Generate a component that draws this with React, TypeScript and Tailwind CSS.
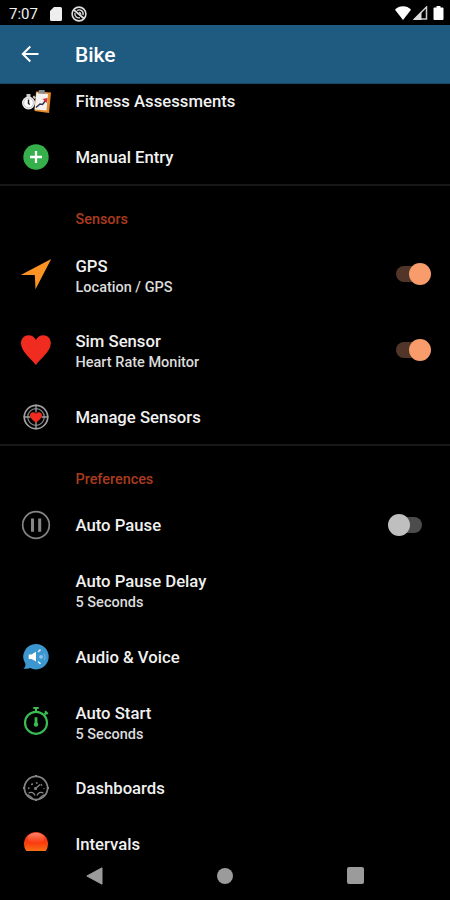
import { useState } from 'react';
import type { ReactNode } from 'react';

const AssessmentIcon = () => (
  <svg width="32" height="32" viewBox="0 0 32 32">
    <path d="M16 6.5 31 7.5 29 28 14.5 26z" fill="#e58a2b" />
    <path d="M16.5 7.5 28 9 26.5 25.5 14.5 24.5z" fill="#f4f2f0" />
    <path d="M18 8.500 19 5h5.500l.8 4z" fill="#8b8b8b" />
    <path d="m16 22.500 4-3.500 2.500.5 4-5" fill="none" stroke="#363049" strokeWidth="1.500" />
    <path d="m22.500 14 5-1-.6 5z" fill="#dd2c34" />
    <circle cx="8.500" cy="18" r="6.500" fill="#eeeeee" />
    <path d="M6.500 9h4v3h-4zM12.500 12l1.500-1.500 2 2-1.500 1.500z" fill="#cccccc" />
    <circle cx="8.500" cy="18" r="4.800" fill="#fff" stroke="#a6a6a6" strokeWidth=".6" />
    <path d="M8.500 14.500v4l1.300 1" fill="none" stroke="#222" strokeWidth="1.500" />
  </svg>
);

const PlusIcon = () => (
  <svg width="32" height="32" viewBox="0 0 32 32">
    <circle cx="16" cy="16" r="12.700" fill="#36b04a" />
    <path d="M16 10v12M10 16h12" stroke="#fff" strokeWidth="2.300" />
  </svg>
);

const ArrowIcon = () => (
  <svg width="32" height="32" viewBox="0 0 32 32">
    <path d="M31.200 1 15.500 31.200l-.7-14.200L.7 17z" fill="#fb9425" />
  </svg>
);

const HeartIcon = () => (
  <svg width="32" height="32" viewBox="0 0 32 32">
    <path d="M15.800 31C11 24.500 1 17.500 1 9.200 1 4.500 4.300 1.300 8.500 1.300c3.400 0 6 1.800 7.400 4.800 1.400-3 4.100-4.800 7.400-4.800 4.300 0 7.500 3.200 7.500 7.900C30.800 17.500 20.500 24.500 15.800 31z" fill="#f02c20" />
  </svg>
);

const TargetIcon = () => (
  <svg width="32" height="32" viewBox="0 0 32 32">
    <circle cx="16" cy="16" r="11.700" fill="none" stroke="#a0a0a0" strokeWidth="1.700" />
    <circle cx="16" cy="16" r="8.300" fill="none" stroke="#858585" strokeWidth="1.300" />
    <path d="M16 3.500v8M16 21v7.500M3.500 16h7M21.500 16h7" stroke="#a0a0a0" strokeWidth="1.300" />
    <path d="M16 22c-2-2.300-6-4.300-6-7.700 0-3.500 4.500-4 6-1.500 1.500-2.500 6-2 6 1.500 0 3.400-4 5.400-6 7.700z" fill="#f02c20" />
  </svg>
);

const PauseIcon = () => (
  <svg width="32" height="32" viewBox="0 0 32 32">
    <circle cx="16" cy="16" r="13.300" fill="none" stroke="#858585" strokeWidth="1.700" />
    <path d="M12.500 9.500v13.300M19.700 9.500v13.300" stroke="#858585" strokeWidth="3" />
  </svg>
);

const VoiceIcon = () => (
  <svg width="32" height="32" viewBox="0 0 32 32">
    <path d="M16 3a12.700 12.700 0 1 1-5.800 24c-2 .8-4.500 1-6.700.7 1.500-1.200 2-2.700 1.900-5A12.700 12.700 0 0 1 16 3z" fill="#3c96cf" />
    <path d="M8.700 13.500h2.800l4.500-2.700v9.800l-4.500-2.600H8.700z" fill="#fff" />
    <path d="m18 11 2.500-2.300M18 20.500l2.500 2.300" stroke="#dceefa" strokeWidth="1.600" />
    <circle cx="21" cy="15.800" r="1.900" fill="#8fc7ea" />
    <path d="M24 12.500c1.200 2 1.200 4.600 0 6.600" fill="none" stroke="#68afdc" strokeWidth="1.200" />
  </svg>
);

const StopwatchIcon = () => (
  <svg width="32" height="32" viewBox="0 0 32 32">
    <circle cx="16" cy="17.800" r="11" fill="none" stroke="#39bd52" strokeWidth="2.200" />
    <path d="M13.300 3.100h5.400M16 3V7M24.500 9.500l2.500-2.500M25 6.300l2.800 2.700" stroke="#39bd52" strokeWidth="2" />
    <path d="M16 12.300v8" stroke="#39bd52" strokeWidth="2.800" />
    <circle cx="16" cy="19.500" r="2.200" fill="#39bd52" />
  </svg>
);

const GaugeIcon = () => (
  <svg width="32" height="32" viewBox="0 0 32 32" fill="none" stroke="#858585">
    <circle cx="16" cy="16" r="11.600" strokeWidth="1.700" />
    <path d="M16 3v2M16 27v2M3 16h2M27 16h2" strokeWidth="2" />
    <path d="M8.500 17A8 8 0 0 1 24 17" strokeWidth="1.500" strokeDasharray="1.800 3.200" />
    <path d="m15 17 5-4.500M8.500 21c3-1.500 5.500-.5 6.500 2.500M23.500 21c-3-1.500-5.500-.5-6.500 2.500M7.500 22.500l5 3.500M24.500 22.500l-5 3.500" strokeWidth="1.300" />
    <circle cx="15.500" cy="16.500" r="1.500" fill="#858585" stroke="none" />
  </svg>
);

const BallIcon = () => (
  <svg width="32" height="32" viewBox="0 0 32 32">
    <defs>
      <linearGradient id="ball" x1="0" y1="0" x2="0" y2="1">
        <stop offset="0" stopColor="#ef3e24" />
        <stop offset=".45" stopColor="#fa3a0d" />
        <stop offset=".85" stopColor="#f67a18" />
      </linearGradient>
      <linearGradient id="shine" x1="0" y1="0" x2="0" y2="1">
        <stop offset="0" stopColor="#ffb8a0" stopOpacity=".6" />
        <stop offset="1" stopColor="#ff7048" stopOpacity=".1" />
      </linearGradient>
    </defs>
    <circle cx="16" cy="16" r="12" fill="url(#ball)" />
    <ellipse cx="16" cy="10" rx="8.500" ry="5" fill="url(#shine)" />
  </svg>
);

interface RowProps {
  title: string;
  subtitle?: string;
  icon?: ReactNode;
  on?: boolean;
}

function Toggle({ initial }: { initial: boolean }) {
  const [on, setOn] = useState(initial);
  return (
    <button
      role="switch"
      aria-checked={on}
      onClick={() => setOn(!on)}
      className={`mr-[19px] flex h-[22px] w-[43px] items-center ${on ? 'justify-end' : 'justify-start'}`}
    >
      <span className={`h-4 w-[25px] rounded-full ${on ? '-mr-[12px] bg-[#503528]' : 'order-2 -ml-[13px] bg-[#4c4c4c]'}`} />
      <span className={`z-10 size-[22px] rounded-full ${on ? 'bg-[#f99c6c]' : 'bg-[#bfbfbf]'}`} />
    </button>
  );
}

function Row({ title, subtitle, icon, on }: RowProps) {
  return (
    <div className={`flex shrink-0 items-center ${subtitle ? 'h-[75.5px] pb-[2px]' : 'h-14'}`}>
      <div className="flex w-[75.5px] shrink-0 pl-5">{icon}</div>
      <div className={`flex-1 ${subtitle ? 'pt-[5px]' : 'pt-px'}`}>
        <p className="text-[16.7px] leading-[21px] font-medium">{title}</p>
        {subtitle && <p className="text-[14.5px] leading-[21px] font-medium text-[#dcdcdc]">{subtitle}</p>}
      </div>
      {on !== undefined && <Toggle initial={on} />}
    </div>
  );
}

const Category = ({ title }: { title: string }) => (
  <h2 className="-mt-px h-[53.5px] shrink-0 border-t-2 border-[#181818] pt-6 pl-[75.5px] text-[14.4px] leading-5 font-medium text-[#ab3b1e]">
    {title}
  </h2>
);

function StatusBar() {
  return (
    <div className="flex h-[25px] shrink-0 items-center pt-[2px] pr-[6px] pl-[9px]">
      <span className="w-[41px] text-[15px] leading-5">7:07</span>
      <svg width="12" height="14" viewBox="0 0 12 14">
        <path d="M4 0h6.500Q12 0 12 1.500v11Q12 14 10.500 14h-9Q0 14 0 12.500V4z" fill="#eee" />
      </svg>
      <svg className="ml-[9px]" width="16" height="16" viewBox="0 0 16 16" fill="none" stroke="#ddd">
        <circle cx="8" cy="8" r="6.900" strokeWidth="1.600" />
        <path d="m3 4 10 8.500" strokeWidth="1.800" />
        <path d="M6 4.500c3-1.700 7 .5 6 4.500M4 7c-.7 3 2 5.500 5 4.700M8 6.500c1.200 0 2 1 1.700 2" strokeWidth="1.400" />
      </svg>
      <div className="ml-auto flex items-center gap-[2px] pb-px">
        <svg width="16" height="14" viewBox="0 0 16 14">
          <path d="M0 3.700C4-.9 12-.9 16 3.700L8 14z" fill="#fff" />
        </svg>
        <svg width="15" height="14" viewBox="0 0 15 14">
          <path d="M13.500 1v12H1.500z" fill="none" stroke="#ccc" strokeWidth="1.500" />
          <path d="M0 14 8.500 5.500V14z" fill="#ddd" />
        </svg>
        <svg className="ml-[3px]" width="11" height="14" viewBox="0 0 11 14">
          <path d="M3.500 0h4v1.500H9.500q1 0 1 1V13q0 1-1 1h-8q-1 0-1-1V2.500q0-1 1-1h2z" fill="#fff" />
        </svg>
      </div>
    </div>
  );
}

export default function App() {
  return (
    <div className="flex h-[900px] w-[450px] flex-col overflow-hidden bg-black font-[Roboto,sans-serif] text-[#f1f1f1]">
      <StatusBar />
      <header className="flex h-[59px] shrink-0 items-center border-b border-[#194663] bg-[#1f5a80] pl-[21px]">
        <svg width="18" height="18" viewBox="0 0 18 18" fill="none" stroke="#fff" strokeWidth="2">
          <path d="M17.500 9H2M9.300 1.500 1.800 9l7.500 7.500" />
        </svg>
        <h1 className="ml-9 pt-[2px] text-[21px] leading-6 font-medium text-white">Bike</h1>
      </header>

      <main className="flex h-[767px] shrink-0 flex-col overflow-hidden">
        <div className="-mt-[11px] flex flex-col">
          <Row title="Fitness Assessments" icon={<AssessmentIcon />} />
          <Row title="Manual Entry" icon={<PlusIcon />} />

          <Category title="Sensors" />
          <Row title="GPS" subtitle="Location / GPS" icon={<ArrowIcon />} on />
          <Row title="Sim Sensor" subtitle="Heart Rate Monitor" icon={<HeartIcon />} on />
          <Row title="Manage Sensors" icon={<TargetIcon />} />

          <Category title="Preferences" />
          <Row title="Auto Pause" icon={<PauseIcon />} on={false} />
          <Row title="Auto Pause Delay" subtitle="5 Seconds" />
          <Row title="Audio & Voice" icon={<VoiceIcon />} />
          <Row title="Auto Start" subtitle="5 Seconds" icon={<StopwatchIcon />} />
          <Row title="Dashboards" icon={<GaugeIcon />} />
          <Row title="Intervals" icon={<BallIcon />} />
        </div>
      </main>

      <nav className="flex h-[49px] shrink-0 items-center justify-center gap-[114px] pr-[1px]">
        <svg width="17" height="18" viewBox="0 0 17 18">
          <path d="M16 .8v16.400L.8 9z" fill="#9b9b9b" stroke="#9b9b9b" strokeLinejoin="round" />
        </svg>
        <span className="size-4 rounded-full bg-[#9b9b9b]" />
        <span className="size-[17px] rounded-[2px] bg-[#9b9b9b]" />
      </nav>
    </div>
  );
}
